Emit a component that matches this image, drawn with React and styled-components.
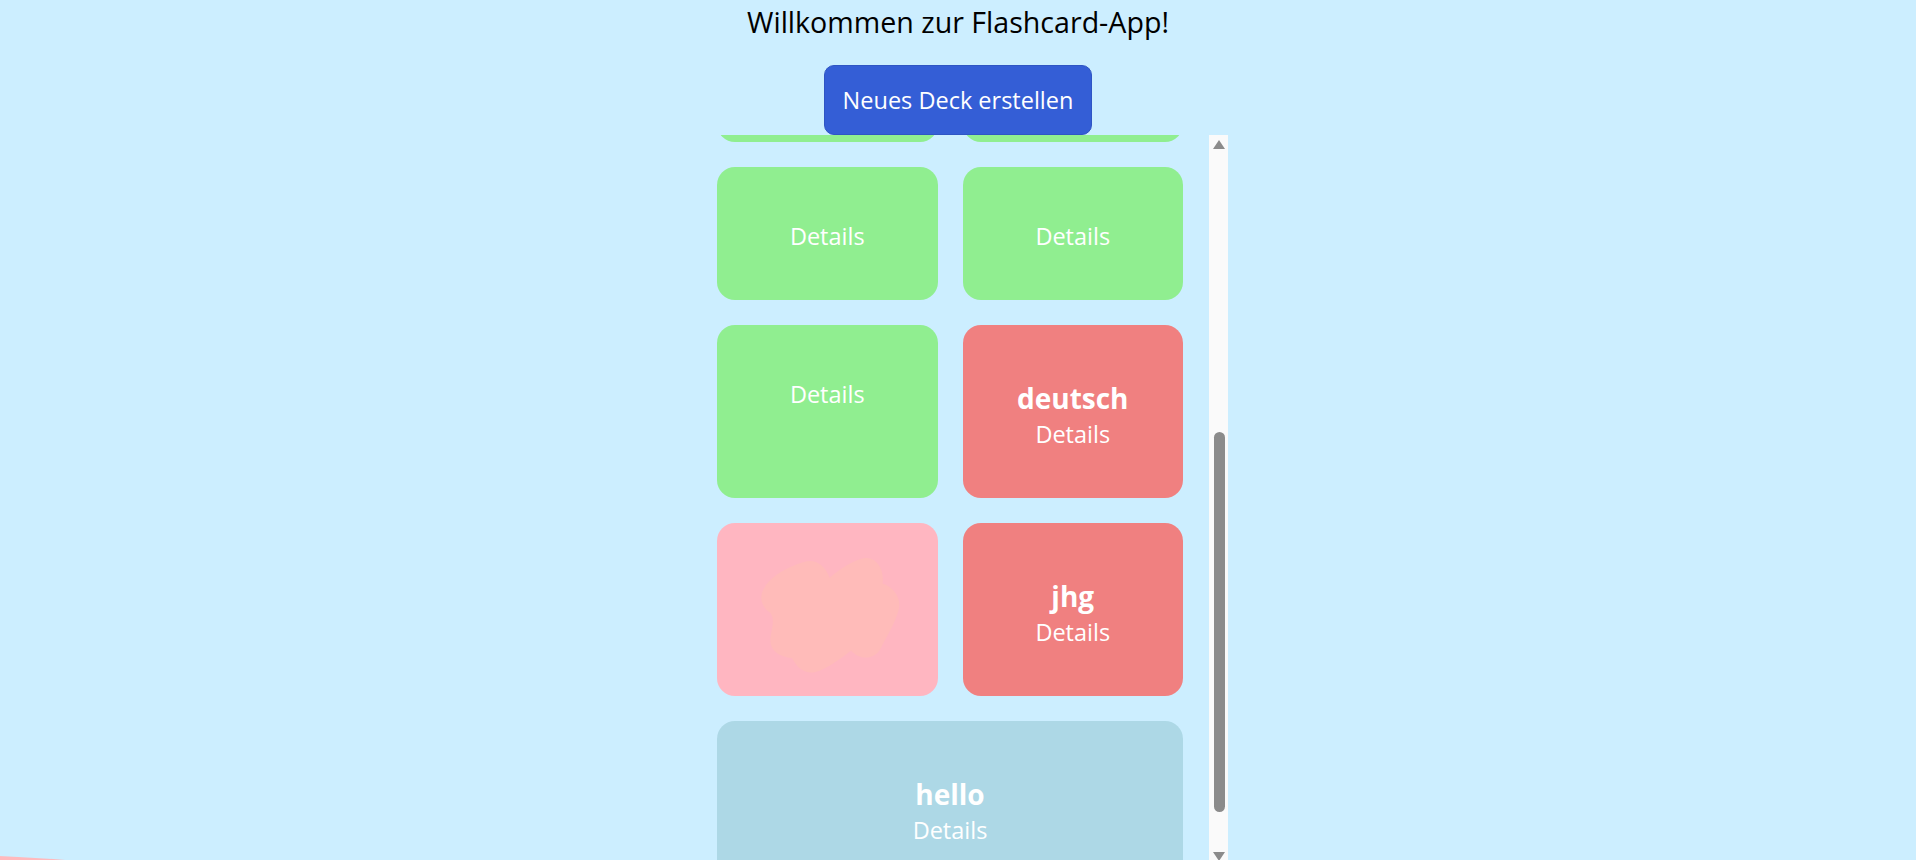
import React, { useLayoutEffect, useRef, useState } from 'react';
import styled, { createGlobalStyle } from 'styled-components';

const GlobalStyle = createGlobalStyle`
    html, body {
        margin: 0;
        padding: 0;
        overflow: hidden;
        background-color: #cceeff;
        font-family: "Open Sans", "Noto Sans", sans-serif;
    }
`;

const Page = styled.div`
    display: flex;
    flex-direction: column;
    align-items: center;
    min-height: 100vh;
`;

const Title = styled.h1`
    margin: 0;
    padding-top: 3px;
    font-size: 28.6px;
    font-weight: 400;
    line-height: 38px;
    color: #000;
`;

const NewDeckButton = styled.button`
    margin-top: 24px;
    height: 70px;
    padding: 0 18px;
    border: 1px solid #2f55c4;
    border-radius: 10px;
    background-color: #345ed6;
    color: #fff;
    font-family: inherit;
    font-size: 23.5px;
    cursor: pointer;
`;

const ScrollFrame = styled.div`
    display: flex;
    width: 540px;
    height: 85vh;
`;

const DeckScroller = styled.div`
    flex: 1;
    overflow-y: auto;
    scrollbar-width: none;

    &::-webkit-scrollbar {
        display: none;
    }
`;

const ScrollBar = styled.div`
    display: flex;
    flex-direction: column;
    width: 19px;
    background-color: #fafafa;
`;

const ArrowButton = styled.div`
    display: flex;
    align-items: center;
    justify-content: center;
    height: 19px;
    flex-shrink: 0;
`;

const Track = styled.div`
    flex: 1;
    display: flex;
    flex-direction: column;
    align-items: center;
    padding-left: 1px;
`;

const Thumb = styled.div`
    width: 11px;
    border-radius: 6px;
    background-color: #8b8b8b;
`;

const DeckGrid = styled.div`
    display: grid;
    grid-template-columns: 1fr 1fr;
    gap: 25px;
    padding: 53px 26px 39px 29px;
`;

const DeckCard = styled.div`
    grid-column: ${({ $wide }) => ($wide ? 'span 2' : 'auto')};
    background-color: ${({ $color }) => $color};
    border-radius: 18px;
    padding: 53px 10px 48px;
    color: #fff;
    text-align: center;
    box-sizing: border-box;
    cursor: pointer;
`;

const ImageCard = styled.div`
    display: flex;
    align-items: center;
    justify-content: center;
    background-color: ${({ $color }) => $color};
    border-radius: 18px;
    padding: 12px 0 0 6px;
    cursor: pointer;
`;

const DeckName = styled.div`
    font-size: 28px;
    font-weight: 700;
    line-height: 40px;
`;

const DetailsLink = styled.div`
    font-size: 23.5px;
    line-height: 32px;
`;

const CornerBlob = styled.div`
    position: fixed;
    left: -460px;
    top: 855px;
    width: 800px;
    height: 200px;
    border-radius: 50%;
    background-color: #ffb9bd;
`;

const colors = {
    green: '#90ee90',
    red: '#f08080',
    pink: '#ffb6c1',
    blue: '#add8e6',
};

const decks = [
    { id: 1, name: 'englisch', color: colors.red },
    { id: 2, name: '', color: colors.green },
    { id: 3, name: '', color: colors.green },
    { id: 4, name: '', color: colors.green },
    { id: 5, name: '', color: colors.green },
    { id: 6, name: '', color: colors.green },
    { id: 7, name: '', color: colors.green },
    { id: 8, name: '', color: colors.green },
    { id: 9, name: '', color: colors.green },
    { id: 10, name: 'deutsch', color: colors.red },
    { id: 11, image: true, color: colors.pink },
    { id: 12, name: 'jhg', color: colors.red },
    { id: 13, name: 'hello', color: colors.blue, wide: true },
];

const Blob = () => (
    <svg width="145" height="115" viewBox="0 0 142 117">
        <path
            d="M4 30 C10 18 30 8 44 4 C56 0 66 8 70 20 C80 12 94 2 106 0 C118 -1 126 12 124 26 C136 30 144 42 140 54 C136 68 128 80 122 92 C116 104 100 104 92 94 C82 102 68 112 56 116 C44 119 36 110 32 102 C18 100 8 94 10 80 C12 70 14 62 10 56 C0 50 -2 38 4 30 Z"
            fill="#ffbbb9"
        />
    </svg>
);

const Arrow = ({ down }) => (
    <svg width="12" height="9" viewBox="0 0 12 9">
        <path d={down ? 'M0 0 H12 L6 9 Z' : 'M6 0 L12 9 H0 Z'} fill="#8b8b8b" />
    </svg>
);

export default function App() {
    const scrollerRef = useRef(null);
    const trackRef = useRef(null);
    const [thumb, setThumb] = useState({ top: 0, height: 0 });

    const updateThumb = () => {
        const el = scrollerRef.current;
        const track = trackRef.current;
        if (!el || !track) return;
        const len = track.clientHeight;
        setThumb({
            top: (len * el.scrollTop) / el.scrollHeight,
            height: (len * el.clientHeight) / el.scrollHeight,
        });
    };

    useLayoutEffect(() => {
        if (scrollerRef.current) scrollerRef.current.scrollTop = 535;
        updateThumb();
    }, []);

    return (
        <>
            <GlobalStyle />
            <CornerBlob />
            <Page>
                <Title>Willkommen zur Flashcard-App!</Title>
                <NewDeckButton>Neues Deck erstellen</NewDeckButton>
                <ScrollFrame>
                    <DeckScroller ref={scrollerRef} onScroll={updateThumb}>
                        <DeckGrid>
                            {decks.map((deck) =>
                                deck.image ? (
                                    <ImageCard key={deck.id} $color={deck.color}>
                                        <Blob />
                                    </ImageCard>
                                ) : (
                                    <DeckCard key={deck.id} $color={deck.color} $wide={deck.wide}>
                                        {deck.name && <DeckName>{deck.name}</DeckName>}
                                        <DetailsLink>Details</DetailsLink>
                                    </DeckCard>
                                )
                            )}
                        </DeckGrid>
                    </DeckScroller>
                    <ScrollBar>
                        <ArrowButton>
                            <Arrow />
                        </ArrowButton>
                        <Track ref={trackRef}>
                            <Thumb style={{ marginTop: thumb.top, height: thumb.height }} />
                        </Track>
                        <ArrowButton>
                            <Arrow down />
                        </ArrowButton>
                    </ScrollBar>
                </ScrollFrame>
            </Page>
        </>
    );
}
